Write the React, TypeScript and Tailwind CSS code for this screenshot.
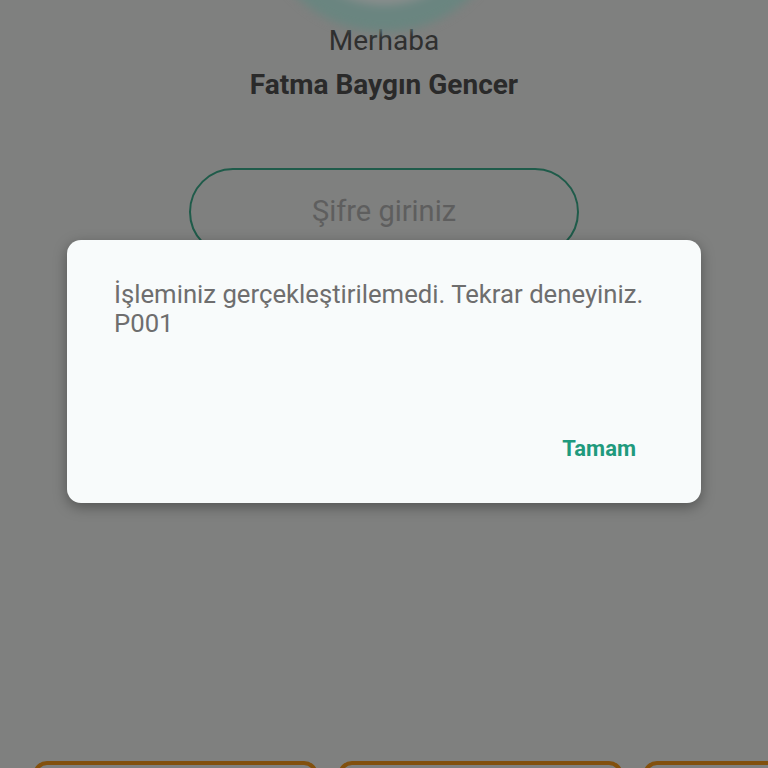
import React from 'react';

// Login screen with a dimmed backdrop and an error dialog on top
export default function App() {
  return (
    <div className="relative h-[768px] w-[768px] overflow-hidden bg-[#7f807f] font-['Roboto',sans-serif]">
      {/* Page underneath (already dimmed) */}
      <div className="flex flex-col items-center">
        {/* Avatar, mostly off the top edge */}
        <div className="mt-[-218px] h-[250px] w-[250px] rounded-full bg-[#6a8580] p-[27px] blur-[5px]">
          <div className="h-full w-full rounded-full bg-[#8a8e8d]"></div>
        </div>

        <div className="mt-[-7px] text-[28px] leading-[32px] text-[#2f2f2f]">Merhaba</div>
        <div className="mt-[12px] text-[28px] font-bold leading-[32px] text-[#2a2a2a]">Fatma Baygın Gencer</div>

        <div className="mt-[67px] flex h-[88px] w-[390px] items-center justify-center rounded-full border-2 border-[#1f5b4a]">
          <span className="text-[29px] text-[#5e5e5e]">Şifre giriniz</span>
        </div>

        {/* Quick action cards, cut by the bottom edge */}
        <div className="mt-[505px] flex w-full gap-[20px] pl-[33px]">
          <div className="h-[120px] w-[285px] shrink-0 rounded-[14px] border-4 border-[#82500e]"></div>
          <div className="h-[120px] w-[285px] shrink-0 rounded-[14px] border-4 border-[#82500e]"></div>
          <div className="h-[120px] w-[285px] shrink-0 rounded-[14px] border-4 border-[#82500e]"></div>
        </div>
      </div>

      {/* Dialog */}
      <div className="absolute inset-0 flex justify-center pt-[240px]">
        <div className="h-[263px] w-[634px] rounded-[14px] bg-[#f8fbfb] px-[47px] pt-[40px] shadow-[0_4px_14px_rgba(0,0,0,0.35)]">
          <p className="text-[25.7px] leading-[29px] text-[#6e6e6e]">
            İşleminiz gerçekleştirilemedi. Tekrar deneyiniz.
            <br />
            P001
          </p>
          <div className="mt-[99px] flex justify-end pr-[18px]">
            <button className="text-[22px] font-bold leading-[24px] text-[#1f9a7d]">Tamam</button>
          </div>
        </div>
      </div>
    </div>
  );
}
